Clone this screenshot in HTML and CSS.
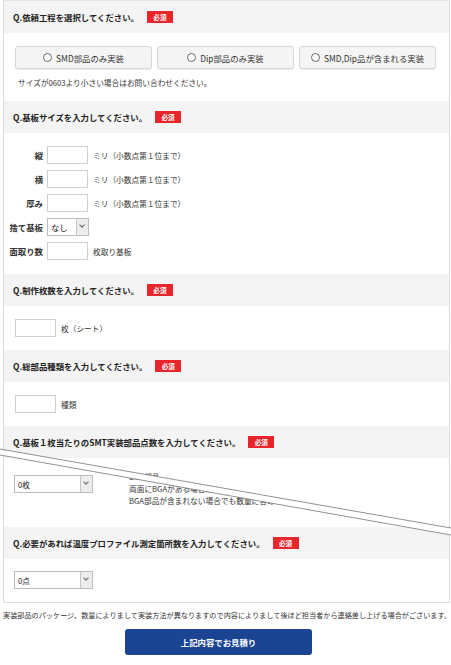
FILE: index.html
```html
<!DOCTYPE html>
<html lang="ja">
<head>
    <meta charset="UTF-8">
    <meta name="viewport" content="width=device-width, initial-scale=1.0">
    <title>実装見積りフォーム</title>
    <link rel="stylesheet" href="styles.css">
</head>
<body>
    <div class="page">
        <div class="form">
            <section class="q">
                <h2 class="q-head">Q.依頼工程を選択してください。<span class="req">必須</span></h2>
                <div class="q-body">
                    <div class="choices">
                        <button class="choice"><span class="radio"></span>SMD部品のみ実装</button>
                        <button class="choice"><span class="radio"></span>Dip部品のみ実装</button>
                        <button class="choice"><span class="radio"></span>SMD,Dip品が含まれる実装</button>
                    </div>
                    <p class="note">サイズが0603より小さい場合はお問い合わせください。</p>
                </div>
            </section>

            <section class="q">
                <h2 class="q-head">Q.基板サイズを入力してください。<span class="req">必須</span></h2>
                <div class="q-body rows">
                    <div class="row">
                        <span class="label">縦</span>
                        <input class="field" type="text">
                        <span class="unit">ミリ（小数点第１位まで）</span>
                    </div>
                    <div class="row">
                        <span class="label">横</span>
                        <input class="field" type="text">
                        <span class="unit">ミリ（小数点第１位まで）</span>
                    </div>
                    <div class="row">
                        <span class="label">厚み</span>
                        <input class="field" type="text">
                        <span class="unit">ミリ（小数点第１位まで）</span>
                    </div>
                    <div class="row">
                        <span class="label">捨て基板</span>
                        <div class="select small"><span class="select-text">なし</span><span class="arrow"></span></div>
                    </div>
                    <div class="row">
                        <span class="label">面取り数</span>
                        <input class="field" type="text">
                        <span class="unit">枚取り基板</span>
                    </div>
                </div>
            </section>

            <section class="q">
                <h2 class="q-head">Q.制作枚数を入力してください。<span class="req">必須</span></h2>
                <div class="q-body">
                    <div class="row">
                        <input class="field" type="text">
                        <span class="unit">枚（シート）</span>
                    </div>
                </div>
            </section>

            <section class="q">
                <h2 class="q-head">Q.総部品種類を入力してください。<span class="req">必須</span></h2>
                <div class="q-body">
                    <div class="row">
                        <input class="field" type="text">
                        <span class="unit">種類</span>
                    </div>
                </div>
            </section>

            <section class="q">
                <h2 class="q-head">Q.基板１枚当たりのSMT実装部品点数を入力してください。<span class="req">必須</span></h2>
                <div class="q-body smt">
                    <div class="select wide"><span class="select-text">0枚</span><span class="arrow"></span></div>
                    <div class="smt-note">
                        <p>BGA部品</p>
                        <p>両面にBGAがある場合は</p>
                        <p>BGA部品が含まれない場合でも数量に含めて</p>
                    </div>
                </div>
            </section>

            <section class="q">
                <h2 class="q-head">Q.必要があれば温度プロファイル測定箇所数を入力してください。<span class="req">必須</span></h2>
                <div class="q-body last">
                    <div class="select wide"><span class="select-text">0点</span><span class="arrow"></span></div>
                </div>
            </section>
        </div>

        <p class="footnote">実装部品のパッケージ、数量によりまして実装方法が異なりますので内容によりまして後ほど担当者から連絡差し上げる場合がございます。</p>

        <button class="submit">上記内容でお見積り</button>

        <!-- 画面キャプチャの切れ目 -->
        <svg class="tear" width="451" height="665" viewBox="0 0 451 665">
            <polygon points="0,449 451,528 451,535 0,455" fill="#fff"/>
            <line x1="0" y1="449" x2="451" y2="528" stroke="#777" stroke-width="0.8"/>
            <line x1="0" y1="455" x2="451" y2="535" stroke="#777" stroke-width="0.8"/>
        </svg>
    </div>
</body>
</html>
```

FILE: styles.css
```css
body {
    margin: 0;
    background: #fff;
    font-family: 'Noto Sans CJK JP', 'Noto Sans', sans-serif;
    color: #333;
}

.page {
    position: relative;
    width: 451px;
    height: 665px;
    overflow: hidden;
}

.form {
    margin: 0 1px 0 3px;
    border: 1px solid #dcdcdc;
    border-top-color: #e4e4e4;
}

.q-head {
    margin: 0;
    height: 32px;
    padding-left: 9px;
    display: flex;
    align-items: center;
    background: #f4f4f4;
    font-size: 8.4px;
    font-weight: bold;
    color: #222;
}

.req {
    margin-left: 8px;
    width: 26px;
    height: 12px;
    line-height: 12px;
    text-align: center;
    background: #e8252b;
    color: #fff;
    font-size: 6.6px;
    font-weight: bold;
}

.q-body {
    padding: 13px 11px 13px;
}

.choices {
    display: flex;
    gap: 5px;
}

.choice {
    width: 137px;
    height: 23px;
    padding: 0;
    display: flex;
    align-items: center;
    justify-content: center;
    gap: 4px;
    background: #f5f5f5;
    border: 1px solid #d6d6d6;
    border-radius: 3px;
    box-shadow: 0 1px 1px rgba(0, 0, 0, 0.08);
    font-family: inherit;
    font-size: 8.4px;
    color: #333;
}

.radio {
    width: 7px;
    height: 7px;
    border: 1px solid #666;
    border-radius: 50%;
    background: #fff;
}

.note {
    margin: 9px 0 0 3px;
    font-size: 7.7px;
    line-height: 10px;
    color: #333;
}

.rows {
    padding: 13px 11px 14px 0;
    display: flex;
    flex-direction: column;
    gap: 6px;
}

.row {
    display: flex;
    align-items: center;
    height: 18px;
}

.label {
    width: 39px;
    margin-right: 4px;
    text-align: right;
    font-size: 8.4px;
    font-weight: bold;
    color: #333;
}

.field {
    width: 41px;
    height: 18px;
    box-sizing: border-box;
    margin: 0;
    padding: 0;
    border: 1px solid #cfcfcf;
    background: #fff;
}

.unit {
    margin-left: 5px;
    font-size: 7.7px;
    color: #333;
}

.select {
    height: 18px;
    box-sizing: border-box;
    display: flex;
    align-items: stretch;
    border: 1px solid #bdbdbd;
    background: #fff;
}

.select.small {
    width: 42px;
}

.select.wide {
    width: 79px;
}

.select-text {
    flex: 1;
    display: flex;
    align-items: center;
    padding-left: 3px;
    font-size: 7.7px;
    color: #222;
}

.select.small .select-text {
    font-size: 8.4px;
}

.arrow {
    width: 11px;
    position: relative;
    background: #ececec;
    border-left: 1px solid #c8c8c8;
}

.arrow::after {
    content: '';
    position: absolute;
    left: 3px;
    top: 4px;
    width: 3px;
    height: 3px;
    border-right: 1px solid #666;
    border-bottom: 1px solid #666;
    transform: rotate(45deg);
}

.smt {
    height: 69px;
    box-sizing: border-box;
    padding: 17px 10px 0;
    display: flex;
    align-items: flex-start;
    gap: 36px;
}

.smt-note {
    margin-top: -4px;
    font-size: 7.7px;
    line-height: 12px;
    color: #333;
}

.smt-note p {
    margin: 0;
    white-space: nowrap;
}

.q-body.last {
    padding: 12px 10px 13px;
}

.footnote {
    margin: 7px 0 0 3px;
    font-size: 7.15px;
    line-height: 10px;
    white-space: nowrap;
    color: #333;
}

.submit {
    display: flex;
    align-items: center;
    justify-content: center;
    margin: 9px 0 0 125px;
    width: 187px;
    height: 26px;
    padding: 0;
    border: none;
    border-radius: 3px;
    background: #1b4592;
    color: #fff;
    font-family: inherit;
    font-size: 8.4px;
    font-weight: bold;
}

.tear {
    position: absolute;
    left: 0;
    top: 0;
    pointer-events: none;
}
```
